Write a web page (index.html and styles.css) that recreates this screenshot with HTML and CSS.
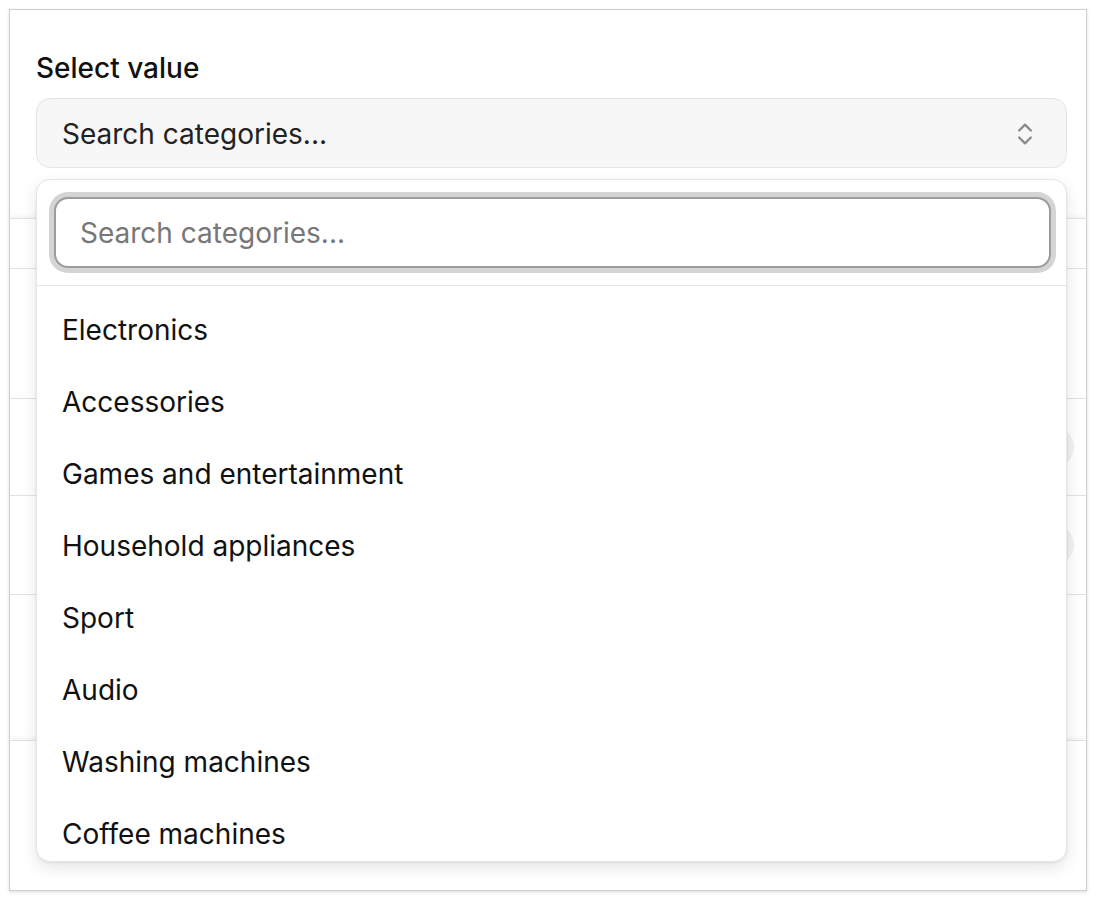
FILE: index.html
```html
<!DOCTYPE html>
<html lang="en">
<head>
    <meta charset="UTF-8">
    <meta name="viewport" content="width=device-width, initial-scale=1.0">
    <title>Select value</title>
    <link rel="stylesheet" href="styles.css">
</head>
<body>
    <div class="frame">
        <div class="field">
            <label class="label">Select value</label>
            <button class="trigger">
                <span>Search categories...</span>
                <svg class="chevrons" viewBox="0 0 24 24" width="28" height="28" fill="none" stroke="currentColor" stroke-width="2" stroke-linecap="round" stroke-linejoin="round">
                    <path d="m7 15 5 5 5-5"/>
                    <path d="m7 9 5-5 5 5"/>
                </svg>
            </button>

            <!-- Open dropdown -->
            <div class="dropdown">
                <div class="search">
                    <input type="text" class="search-input" placeholder="Search categories...">
                </div>
                <ul class="options">
                    <li>Electronics</li>
                    <li>Accessories</li>
                    <li>Games and entertainment</li>
                    <li>Household appliances</li>
                    <li>Sport</li>
                    <li>Audio</li>
                    <li>Washing machines</li>
                    <li>Coffee machines</li>
                </ul>
            </div>
        </div>

        <!-- Content behind the dropdown -->
        <div class="rows">
            <div class="row row-head"></div>
            <div class="row row-a"></div>
            <div class="row row-b"><span class="dot"></span></div>
            <div class="row row-c"><span class="dot"></span></div>
            <div class="row row-d"></div>
            <div class="row row-foot"></div>
        </div>
    </div>
</body>
</html>
```

FILE: styles.css
```css
* {
    box-sizing: border-box;
    font-family: Inter, "Noto Sans", sans-serif;
}

body {
    margin: 0;
    background-color: #fff;
}

.frame {
    margin: 9px;
    height: 882px;
    border: 1px solid #cfcfcf;
    box-shadow: 0 1px 3px rgba(0,0,0,0.15);
    background-color: #fff;
    overflow: hidden;
}

.field {
    position: relative;
    padding: 41px 19px 0 26px;
    z-index: 2;
}

.label {
    display: block;
    font-size: 28px;
    font-weight: 500;
    line-height: 34px;
    color: #111;
    margin-bottom: 13px;
}

.trigger {
    display: flex;
    align-items: center;
    justify-content: space-between;
    width: 100%;
    height: 70px;
    padding: 2px 27px 0 25px;
    font-size: 28px;
    color: #222;
    background-color: #f7f7f7;
    border: 1px solid #e4e4e4;
    border-radius: 14px;
    text-align: left;
}

.chevrons {
    color: #8a8a8a;
}

.dropdown {
    position: absolute;
    top: 169px;
    left: 26px;
    right: 19px;
    height: 683px;
    background-color: #fff;
    border: 1px solid #e6e6e6;
    border-radius: 14px;
    box-shadow: 0 6px 16px rgba(0,0,0,0.10), 0 1px 3px rgba(0,0,0,0.06);
    overflow: hidden;
}

.search {
    padding: 17px 15px 17px 17px;
    border-bottom: 1px solid #e4e4e4;
}

.search-input {
    width: 100%;
    height: 71px;
    padding: 0 24px;
    font-size: 28px;
    color: #222;
    border: 2px solid #9c9c9c;
    border-radius: 14px;
    box-shadow: 0 0 0 5px #d4d4d4;
    outline: none;
}

.search-input::placeholder {
    color: #777;
}

.options {
    list-style: none;
    margin: 0;
    padding: 8px 0 0;
}

.options li {
    height: 72px;
    line-height: 72px;
    padding-left: 25px;
    font-size: 28px;
    color: #111;
}

.rows {
    position: relative;
    z-index: 1;
    padding-top: 50px;
}

.row {
    position: relative;
    border-top: 1px solid #e2e2e2;
}

.row-head {
    height: 50px;
    box-shadow: 0 -2px 4px rgba(0,0,0,0.05);
}

.row-a {
    height: 130px;
}

.row-b {
    height: 97px;
}

.row-c {
    height: 99px;
}

.row-d {
    height: 146px;
}

.row-foot {
    height: 150px;
    box-shadow: 0 -2px 4px rgba(0,0,0,0.05);
}

.dot {
    position: absolute;
    top: 50%;
    right: 12px;
    width: 40px;
    height: 40px;
    margin-top: -20px;
    border-radius: 50%;
    background-color: #f1f1f1;
}
```
